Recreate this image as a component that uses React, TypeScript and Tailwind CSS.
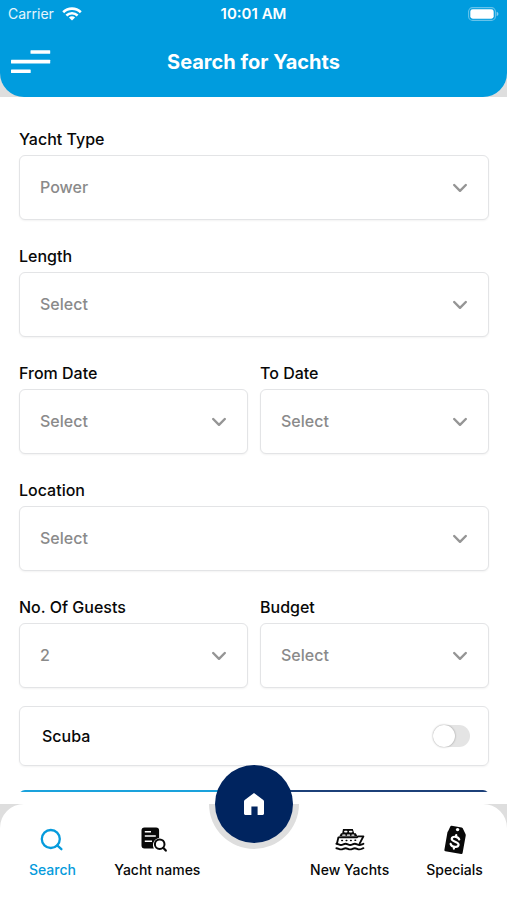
import type { ReactNode } from "react";

function WifiIcon() {
  return (
    <svg width="20" height="14" viewBox="0 0 20 14" fill="none" stroke="#fff" aria-hidden="true">
      <path d="M1.2 5.2a12.6 12.6 0 0 1 17.6 0" strokeWidth="2.6" />
      <path d="M4.4 8.5a8 8 0 0 1 11.2 0" strokeWidth="2.5" />
      <path d="M10 13.6 6.9 10.6a4.4 4.4 0 0 1 6.2 0Z" fill="#fff" stroke="none" />
    </svg>
  );
}

function BatteryIcon() {
  return (
    <svg width="31" height="14" viewBox="0 0 31 14" aria-hidden="true">
      <rect x="0.6" y="0.6" width="26.8" height="12.8" rx="4" fill="none" stroke="#fff" strokeOpacity="0.4" strokeWidth="1.1" />
      <rect x="2.3" y="2.3" width="23.4" height="9.4" rx="2.4" fill="#fff" />
      <path d="M28.6 4.8c1.2.4 1.8 1.2 1.8 2.2s-.6 1.8-1.8 2.2Z" fill="#fff" fillOpacity="0.5" />
    </svg>
  );
}

function MenuIcon() {
  return (
    <svg width="40" height="24" viewBox="0 0 40 24" fill="#fff" aria-hidden="true">
      <rect x="19.5" y="0.2" width="19.7" height="3.6" rx="0.5" />
      <rect x="0" y="9.8" width="39.2" height="3.6" rx="0.5" />
      <rect x="0" y="19.4" width="19.7" height="3.6" rx="0.5" />
    </svg>
  );
}

function Chevron() {
  return (
    <svg
      width="14"
      height="10"
      viewBox="0 0 14 10"
      fill="none"
      aria-hidden="true"
      className="pointer-events-none absolute right-[22px] top-1/2 -translate-y-1/2"
    >
      <path d="M1.2 2 7 7.8 12.8 2" stroke="#959595" strokeWidth="2.4" strokeLinecap="round" strokeLinejoin="round" />
    </svg>
  );
}

function SearchIcon() {
  return (
    <svg width="30" height="28" viewBox="0 0 30 28" fill="none" stroke="currentColor" strokeWidth="2.3" strokeLinecap="round" aria-hidden="true">
      <circle cx="13.8" cy="13" r="9" />
      <path d="m20.2 19.4 4.2 3.8" />
    </svg>
  );
}

function ListSearchIcon() {
  return (
    <svg width="36" height="28" viewBox="0 0 36 28" fill="none" aria-hidden="true">
      <path d="M5.5 1.5h11.6a3 3 0 0 1 3 3v7.6a6.9 6.9 0 0 0-5.2 10.4H5.5a3 3 0 0 1-3-3v-15a3 3 0 0 1 3-3Z" fill="currentColor" />
      <path d="M5.8 5.8H12M5.8 10h11M5.8 15.2H13" stroke="#fff" strokeWidth="1.5" />
      <circle cx="20.7" cy="18.2" r="4.8" fill="#fff" stroke="currentColor" strokeWidth="2" />
      <path d="m24.2 21.8 2.6 2.8" stroke="currentColor" strokeWidth="2.2" strokeLinecap="round" />
    </svg>
  );
}

function YachtIcon() {
  return (
    <svg width="30" height="28" viewBox="0 0 30 28" fill="none" stroke="currentColor" strokeLinejoin="round" strokeLinecap="round" aria-hidden="true">
      {/* cabin and deck */}
      <path d="M8 3h9.8l1.4 4.2h1.6l1.8 3.2H4.2L6 7.200h1.200Z" fill="currentColor" stroke="none" />
      <path d="M10 5.600h1.600M14.800 5.600h1.800" stroke="#fff" strokeWidth="1.8" />
      <path d="M7.800 9.200h2.200M12.400 9.200h2.200M17 9.200h1.800" stroke="#fff" strokeWidth="1.3" />
      {/* hull */}
      <path d="M2 17.400 3.400 11.400h18.200l1.400-1h5.400l-3.800 7.200" fill="#fff" strokeWidth="1.9" />
      <path d="M6.800 14.400h.6M11.200 14.400h.6M15.600 14.400h.6M20 14.200h.6" strokeWidth="1.5" />
      {/* waves */}
      <path d="M1.400 17.800c2 0 2.600 1.200 4.600 1.200s2.600-1.200 4.600-1.200 2.600 1.200 4.600 1.200 2.600-1.200 4.600-1.200 2.600 1.200 4.600 1.200 2.400-.8 4-1.200" strokeWidth="1.9" />
      <path d="M1.400 22.200c2 0 2.600 1.200 4.600 1.200s2.600-1.200 4.600-1.200 2.600 1.200 4.600 1.200 2.600-1.200 4.600-1.200 2.600 1.200 4.600 1.200 2.400-.8 4-1.200" strokeWidth="1.9" />
    </svg>
  );
}

function PriceTagIcon() {
  return (
    <svg width="28" height="30" viewBox="0 0 28 30" fill="none" aria-hidden="true">
      <path
        d="M10.6.8 20.6 2.6c.8.2 1.2.6 1.500 1.300l2.500 5.400c.2.5.2.9.1 1.500l-3.100 17.100c-.1.800-.6 1.100-1.400 1L4.400 26.200c-.8-.2-1.100-.6-1-1.400L6.400 7.600c.1-.6.300-1 .7-1.400l2.200-4.700c.3-.5.700-.8 1.300-.7Z"
        fill="currentColor"
      />
      <circle cx="16.6" cy="4.6" r="1.7" fill="#fff" />
      <g transform="rotate(10 14 16.6)" stroke="#fff" strokeWidth="2.2" strokeLinecap="round">
        <path d="M17.800 13.800c-.6-1.300-2-2-3.700-2-2.200 0-3.800.9-3.800 2.500 0 3.200 7.800 1.600 7.800 4.900 0 1.600-1.700 2.600-4 2.600-1.900 0-3.400-.8-4-2.200" />
        <path d="M14.100 9.900v1.900M14.100 21.800v1.900" />
      </g>
    </svg>
  );
}

function HomeIcon() {
  return (
    <svg width="22" height="22" viewBox="0 0 22 22" aria-hidden="true">
      <path
        d="M11 0 20 6.800c.7.500 1 1 1 1.800v12c0 .8-.5 1.300-1.300 1.300h-5.100V13.600H8.400v8.300H2.300C1.500 21.900 1 21.400 1 20.600v-12c0-.8.300-1.300 1-1.800Z"
        fill="#fff"
      />
    </svg>
  );
}

function SelectField({ id, label, options }: { id: string; label: string; options: string[] }) {
  return (
    <div className="min-w-0">
      <label htmlFor={id} className="mb-1 block text-base leading-6 font-medium text-[#080808]">
        {label}
      </label>
      <div className="relative">
        <select
          id={id}
          className="block h-[65px] w-full appearance-none rounded-md border border-[#e3e4e6] bg-white pr-12 pb-0.5 pl-5 text-base font-medium text-[#8a8a8a] shadow-xs"
        >
          {options.map((o) => (
            <option key={o}>{o}</option>
          ))}
        </select>
        <Chevron />
      </div>
    </div>
  );
}

function Tab({ label, icon, active = false }: { label: string; icon: ReactNode; active?: boolean }) {
  return (
    <a
      href="#"
      aria-current={active ? "page" : undefined}
      className={`flex flex-col items-center whitespace-nowrap text-sm leading-5 font-medium ${active ? "text-[#069bdc]" : "text-[#080808]"}`}
    >
      <span className="mb-0.5 flex h-9 items-center">{icon}</span>
      {label}
    </a>
  );
}

export default function App() {
  return (
    <div className="flex h-dvh flex-col overflow-hidden bg-white font-['Inter','Liberation_Sans',sans-serif]">
      <div className="shrink-0 bg-[#dedede]">
        <header className="rounded-b-3xl bg-[#009cde] text-white">
          <div className="grid h-7 grid-cols-3 items-center px-2 text-sm">
            <span className="flex items-center gap-2 text-white/90">
              Carrier <WifiIcon />
            </span>
            <span className="text-center text-[15px] font-semibold">10:01 AM</span>
            <span className="flex justify-end">
              <BatteryIcon />
            </span>
          </div>
          <div className="grid h-[69px] grid-cols-[40px_1fr_40px] items-start px-[11px] pt-5">
            <button type="button" aria-label="Menu" className="pt-0.5">
              <MenuIcon />
            </button>
            <h1 className="text-center text-xl leading-7 font-bold">Search for Yachts</h1>
          </div>
        </header>
      </div>

      <main className="min-h-0 flex-1 pb-3">
        <form className="h-full overflow-y-auto pt-[30px] pr-[18px] pl-[19px] [scrollbar-width:none]">
          <div className="grid grid-cols-1 gap-6">
            <SelectField id="yacht-type" label="Yacht Type" options={["Power", "Sail"]} />
            <SelectField id="length" label="Length" options={["Select"]} />
            <div className="grid grid-cols-2 gap-3">
              <SelectField id="from-date" label="From Date" options={["Select"]} />
              <SelectField id="to-date" label="To Date" options={["Select"]} />
            </div>
            <SelectField id="location" label="Location" options={["Select"]} />
            <div className="grid grid-cols-2 gap-3">
              <SelectField id="guests" label="No. Of Guests" options={["2", "4", "6", "8"]} />
              <SelectField id="budget" label="Budget" options={["Select"]} />
            </div>
          </div>

          <div className="mt-[18px] flex h-[60px] items-center justify-between rounded-md border border-[#e3e4e6] pr-[18px] pl-[22px] shadow-xs">
            <label htmlFor="scuba" className="text-base leading-6 font-medium text-[#080808]">
              Scuba
            </label>
            <input
              id="scuba"
              type="checkbox"
              role="switch"
              className="h-[22px] w-[37px] appearance-none rounded-full bg-[#e4e4e4] before:block before:size-[22px] before:rounded-full before:bg-white before:shadow-[0_0_2px_rgba(0,0,0,0.4)] checked:bg-[#009cde] checked:before:ml-[15px]"
            />
          </div>

          <div className="mt-6 grid grid-cols-2 pb-6">
            <button type="button" aria-label="Search" className="h-14 rounded-l-md bg-[#1aa2dc]" />
            <button type="reset" aria-label="Reset" className="h-14 rounded-r-md bg-[#1c4079]" />
          </div>
        </form>
      </main>

      <div className="relative shrink-0 bg-[#dedede]">
        <nav className="grid h-24 grid-cols-[6fr_6fr_5fr_6fr_6fr] rounded-t-3xl bg-white pt-[18px]">
          <Tab label="Search" icon={<SearchIcon />} active />
          <Tab label="Yacht names" icon={<ListSearchIcon />} />
          <span />
          <Tab label="New Yachts" icon={<YachtIcon />} />
          <Tab label="Specials" icon={<PriceTagIcon />} />
        </nav>
        <div className="absolute top-0 left-1/2 h-[45px] w-[90px] -translate-x-1/2 rounded-b-full bg-[#dedede]" />
        <button
          type="button"
          aria-label="Home"
          className="absolute -top-[39px] left-1/2 flex size-[78px] -translate-x-1/2 items-center justify-center rounded-full bg-[#00245f]"
        >
          <HomeIcon />
        </button>
      </div>
    </div>
  );
}
